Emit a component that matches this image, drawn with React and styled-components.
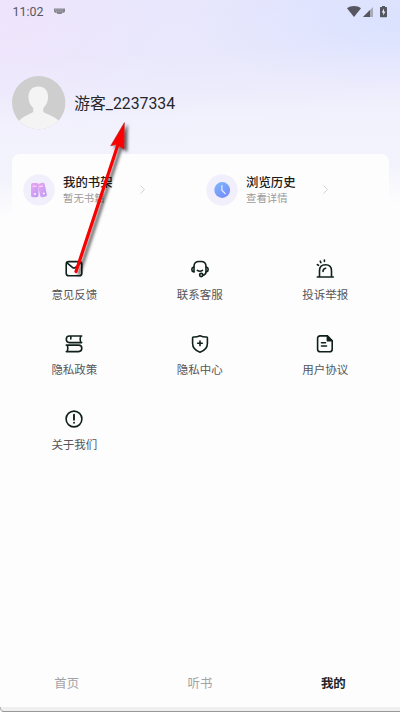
import styled, { createGlobalStyle } from 'styled-components';

const GlobalStyle = createGlobalStyle`
  * {
    box-sizing: border-box;
  }
  body {
    margin: 0;
    background: #fdfdfd;
    font-family: Roboto, 'Noto Sans CJK SC', sans-serif;
  }
  svg {
    display: block;
    flex-shrink: 0;
  }
`;

const Page = styled.main`
  position: relative;
  display: flex;
  flex-direction: column;
  width: 400px;
  height: 712px;
  overflow: hidden;
  background:
    linear-gradient(
      178deg,
      rgba(253, 253, 253, 0) 0,
      rgba(253, 253, 253, 0.06) 60px,
      rgba(253, 253, 253, 0.22) 98px,
      rgba(253, 253, 253, 0.46) 125px,
      rgba(253, 253, 253, 0.54) 180px,
      #fdfdfd 218px
    ),
    radial-gradient(ellipse 210px 75px at 100% 3%, #d9e1ff 0, rgba(217, 225, 255, 0) 100%),
    radial-gradient(ellipse 170px 110px at 0 4%, #efe4fc 0, rgba(239, 228, 252, 0) 100%),
    #e8e7fc;
`;

const StatusBar = styled.header`
  display: flex;
  align-items: center;
  height: 23px;
  padding: 0 11px 0 12.5px;
  font-size: 12.4px;
  color: #55565f;
  .time {
    width: 41.5px;
  }
  .signals {
    display: flex;
    margin-left: auto;
  }
`;

const Profile = styled.section`
  display: flex;
  align-items: center;
  gap: 8.5px;
  height: 54px;
  margin: 52.5px 0 24px 11.7px;
  font-size: 15.8px;
  color: #26262b;
`;

const Card = styled.section`
  display: flex;
  height: 78px;
  margin: 0 11px 0 12px;
  padding: 19.5px 0 0 11px;
  border-radius: 8px;
  background: #fdfdfd;
`;

const Entry = styled.div`
  display: flex;
  align-items: center;
  width: 183px;
  height: 33px;
  .text {
    width: 77px;
    margin-left: 8px;
  }
  .title {
    font-size: 12.4px;
    line-height: 17px;
    font-weight: 500;
    color: #1d1d20;
    white-space: nowrap;
  }
  .sub {
    font-size: 10.4px;
    line-height: 15px;
    color: #9b9b9d;
  }
`;

const Menu = styled.section`
  display: grid;
  grid-template-columns: repeat(3, 125.4px);
  grid-auto-rows: 74.8px;
  margin: 27.7px 12px 0 11.7px;
`;

const MenuItem = styled.div`
  display: flex;
  flex-direction: column;
  align-items: center;
  gap: 8px;
  font-size: 11.5px;
  line-height: 16px;
  color: #55555b;
`;

const TabBar = styled.nav`
  display: flex;
  margin-top: auto;
  height: 48px;
  flex-shrink: 0;
`;

const Tab = styled.div`
  flex: 1;
  text-align: center;
  font-size: 12.4px;
  line-height: 50px;
  font-weight: ${(p) => (p.$active ? 700 : 400)};
  color: ${(p) => (p.$active ? '#222225' : '#a3a3a5')};
`;

const BottomEdge = styled.div`
  height: 5px;
  flex-shrink: 0;
  border-bottom: 1px solid #989898;
  border-left: 1px solid #b5b5b5;
  border-bottom-left-radius: 4px;
  background: #efefef;
`;

const Pointer = styled.svg`
  position: absolute;
  left: 0;
  top: 0;
  pointer-events: none;
`;

const Keyboard = () => (
  <svg width="11" height="7" viewBox="0 0 11 7">
    <path d="M0 .5h11v3l-1 1.2H8.2L7.5 6h-4l-.7-1.3H1L0 3.5z" fill="#85858d" />
    <path d="M1 1.8h9M2 3.3h7" stroke="#c9c7d6" strokeWidth=".6" strokeDasharray="1 .8" />
  </svg>
);

const Signals = () => (
  <svg width="42" height="14" viewBox="0 0 42 14">
    <path d="M0 3.2C3.9.1 10.1.1 14 3.2L7 12z" fill="#55565f" />
    <path d="M16 12L26 2v10z" fill="#a9abb9" />
    <path d="M16 12l7-7v7z" fill="#55565f" />
    <path d="M35 1h3v1h1.5q.5 0 .5.5v9q0 .7-.7.7h-5.6q-.7 0-.7-.7v-9q0-.5.5-.5H35z" fill="#55565f" />
    <path d="M37 3.5L34.7 7.4h1.5v3L38.5 6.5H37z" fill="#eceaff" />
  </svg>
);

const Avatar = () => (
  <svg width="54" height="54" viewBox="0 0 54 54">
    <clipPath id="avatar">
      <circle cx="26.7" cy="26.7" r="26.7" />
    </clipPath>
    <g clipPath="url(#avatar)">
      <rect width="54" height="54" fill="#cecece" />
      <path
        d="M26.3 10.5c-6 0-9.8 4-9.8 10.5 0 4.5 1.7 8.2 4.7 11v3.4c0 2-13.7 5-15.2 12V55h42v-8c-2.5-7-16.7-9.5-16.7-11.6V32c3-2.8 4.8-6.5 4.8-11 0-6.5-3.8-10.5-9.8-10.5z"
        fill="#f4f4f4"
      />
    </g>
  </svg>
);

const ShelfIcon = () => (
  <svg width="32" height="32" viewBox="0 0 32 32">
    <defs>
      <linearGradient id="book" x1="0" y1="0" x2="1" y2="1">
        <stop stopColor="#f2a5ee" />
        <stop offset="1" stopColor="#b69bf8" />
      </linearGradient>
    </defs>
    <circle cx="16" cy="16" r="15.7" fill="#f2effc" />
    <rect x="8" y="9" width="7.5" height="14.3" rx="1.8" fill="url(#book)" />
    <rect x="16" y="9" width="6.8" height="14" rx="1.8" fill="url(#book)" transform="rotate(-12 19.5 16)" />
    <path d="M9.6 12.2h4M16.3 12.7l3.7-.8" stroke="#fae0ff" strokeWidth="1.1" />
    <circle cx="12" cy="20" r=".9" fill="#fff" />
    <circle cx="20.8" cy="19.5" r=".9" fill="#fff" />
  </svg>
);

const HistoryIcon = () => (
  <svg width="32" height="32" viewBox="0 0 32 32">
    <defs>
      <linearGradient id="clock" x1="0" y1="0" x2=".7" y2="1">
        <stop stopColor="#7db8fc" />
        <stop offset="1" stopColor="#778cfa" />
      </linearGradient>
    </defs>
    <circle cx="16" cy="16" r="15.7" fill="#f2effc" />
    <circle cx="16.2" cy="16" r="7.9" fill="url(#clock)" />
    <path d="M15.9 11.5v4.7l3.3 3.5" fill="none" stroke="#e6f0ff" strokeWidth="1.2" strokeLinecap="round" />
  </svg>
);

const Chevron = () => (
  <svg width="5" height="9" viewBox="0 0 5 9">
    <path d="M.5.5l4 4-4 4" fill="none" stroke="#cdcdcf" strokeWidth=".9" />
  </svg>
);

// all menu glyphs share a 20px box and the same stroke
const Glyph = ({ children }) => (
  <svg
    width="20"
    height="20"
    viewBox="0 0 20 20"
    fill="none"
    stroke="#10201b"
    strokeWidth="1.6"
    strokeLinecap="round"
    strokeLinejoin="round"
  >
    {children}
  </svg>
);

const menus = [
  {
    label: '意见反馈',
    icon: (
      <>
        <rect x="2.2" y="2.6" width="15.6" height="14.2" rx="2.6" />
        <path d="M3.6 4.3l4.8 4q1.6 1.3 3.2 0l4.8-4" />
      </>
    ),
  },
  {
    label: '联系客服',
    icon: (
      <>
        <path d="M4 13V7.5q0-5 5-5h2q5 0 5 5v5.500q0 2.500-3 3.200" />
        <path d="M3.800 8q-2 .4-2 2.400t2 2.400M16.200 8q2 .4 2 2.400t-2 2.400" />
        <path d="M7.300 11.400q2.700 1.800 5.200 0" />
        <circle cx="11.2" cy="16" r="1.6" />
      </>
    ),
  },
  {
    label: '投诉举报',
    icon: (
      <>
        <path d="M2.300 18h16M4.500 18v-6.200q0-6 6-6t6 6v6.200" />
        <path d="M8 12.500q0-3 2.700-3.300M2.300 5.600l1.200.7M5.200 2.200l.7 1.400M9.400 1v1.500" />
      </>
    ),
  },
  {
    label: '隐私政策',
    icon: (
      <>
        <path d="M17.700 2H5.400Q2.300 2 2.300 5.200T5.400 8.600h12.300M16.700 2q-1.200 3 0 6.600M6.800 2.200v2.800" />
        <path d="M2.300 11.100h12.300q3.200 0 3.200 3.200t-3.200 3.300H2.300M3.300 11.100q1.300 3.300 0 6.500" />
      </>
    ),
  },
  {
    label: '隐私中心',
    icon: (
      <>
        <path d="M10 1.700q3.500 1.500 6.600 1.300.8 0 .8.800v5.600q0 6-7.400 8.800-7.400-2.800-7.400-8.800V3.800q0-.8.800-.8Q6.500 3.200 10 1.700z" />
        <path d="M7.700 9.300h4.600M10 7v4.600" />
      </>
    ),
  },
  {
    label: '用户协议',
    icon: (
      <>
        <path d="M12.400 1.900H5.300Q2.600 1.900 2.600 4.600v10.600q0 2.600 2.700 2.600h9.200q2.700 0 2.700-2.600V6.700z" />
        <path d="M12.400 2.200v4.500h4.500z" fill="#10201b" />
        <path d="M6.500 8.800h4M6.500 12h5" />
      </>
    ),
  },
  {
    label: '关于我们',
    icon: (
      <>
        <circle cx="10" cy="10" r="7.9" />
        <path d="M10 5.700v5" strokeWidth="1.9" />
        <path d="M10 13.700v.1" strokeWidth="1.9" />
      </>
    ),
  },
];

const tabs = ['首页', '听书', '我的'];

export default function App() {
  return (
    <>
      <GlobalStyle />
      <Page>
        <StatusBar>
          <span className="time">11:02</span>
          <Keyboard />
          <div className="signals">
            <Signals />
          </div>
        </StatusBar>
        <Profile>
          <Avatar />
          <span>游客_2237334</span>
        </Profile>
        <Card>
          <Entry>
            <ShelfIcon />
            <div className="text">
              <div className="title">我的书架</div>
              <div className="sub">暂无书籍</div>
            </div>
            <Chevron />
          </Entry>
          <Entry>
            <HistoryIcon />
            <div className="text">
              <div className="title">浏览历史</div>
              <div className="sub">查看详情</div>
            </div>
            <Chevron />
          </Entry>
        </Card>
        <Menu>
          {menus.map(({ label, icon }) => (
            <MenuItem key={label}>
              <Glyph>{icon}</Glyph>
              <span>{label}</span>
            </MenuItem>
          ))}
        </Menu>
        <TabBar>
          {tabs.map((name) => (
            <Tab key={name} $active={name === '我的'}>
              {name}
            </Tab>
          ))}
        </TabBar>
        <BottomEdge />
        <Pointer width="160" height="290" viewBox="0 0 160 290">
          <defs>
            <filter id="shadow" x="-30%" y="-10%" width="180%" height="120%">
              <feDropShadow dx="3" dy="2.5" stdDeviation="1.7" floodColor="#000" floodOpacity=".6" />
            </filter>
          </defs>
          <g filter="url(#shadow)">
            <path d="M76 271.500L118.500 143" stroke="#fa0505" strokeWidth="3.2" strokeLinecap="round" />
            <path d="M124.400 122.600L110.700 145.800l6.300-1.200 7 4.600z" fill="#fa0505" stroke="#a51616" strokeWidth=".5" />
          </g>
        </Pointer>
      </Page>
    </>
  );
}
